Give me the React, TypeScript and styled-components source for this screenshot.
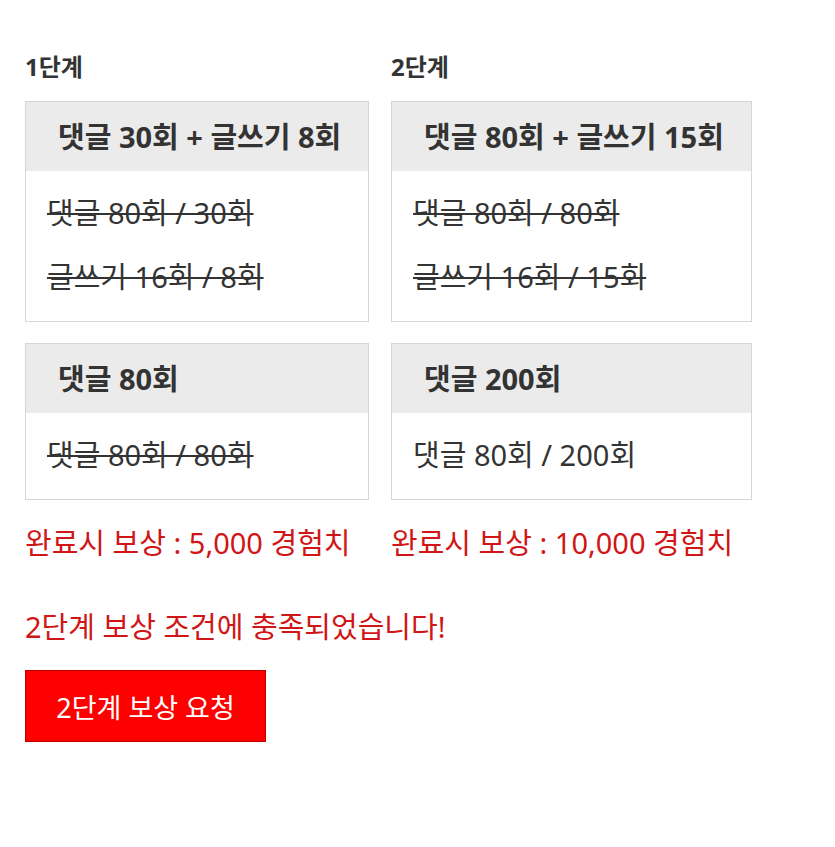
import React from 'react';
import styled, { createGlobalStyle } from 'styled-components';

const GlobalStyle = createGlobalStyle`
  html, body {
    margin: 0;
    padding: 0;
    background: #ffffff;
  }
  body {
    font-family: "Noto Sans", "Noto Sans CJK KR", sans-serif;
    color: #333333;
  }
`;

const Page = styled.div`
  padding: 50px 25px 40px;
`;

const Stages = styled.div`
  display: grid;
  grid-template-columns: 344px 361px;
  column-gap: 22px;
`;

const Stage = styled.div`
  display: flex;
  flex-direction: column;
`;

const StageTitle = styled.h3`
  margin: 1px 0 18px;
  font-size: 24px;
  font-weight: 700;
  line-height: 32px;
  color: #333;
`;

const Mission = styled.div`
  border: 1px solid #d6d6d6;
  background: #fff;
  & + & {
    margin-top: 21px;
  }
`;

const MissionHead = styled.div`
  height: 69px;
  display: flex;
  align-items: center;
  padding: 0 32px 4px;
  box-sizing: border-box;
  background: #ebebeb;
  font-size: 29px;
  font-weight: 700;
  color: #333;
  white-space: nowrap;
`;

const MissionBody = styled.div`
  padding: 10px 21px 12px;
`;

const Progress = styled.div<{ $done?: boolean }>`
  font-size: 29px;
  line-height: 64px;
  color: #333;
  white-space: nowrap;
  text-decoration: ${p => (p.$done ? 'line-through' : 'none')};
  text-decoration-thickness: 2px;
`;

const Reward = styled.div`
  margin-top: 23px;
  font-size: 29px;
  line-height: 40px;
  color: #d01616;
  white-space: nowrap;
`;

const Notice = styled.p`
  margin: 44px 0 0;
  font-size: 29px;
  line-height: 40px;
  color: #d01616;
`;

const RequestButton = styled.button`
  margin-top: 23px;
  width: 241px;
  height: 72px;
  border: 1px solid #b80000;
  background: #ff0000;
  color: #ffffff;
  font-family: inherit;
  font-size: 27px;
  cursor: pointer;
`;

type Line = { text: string; done: boolean };
type MissionData = { title: string; lines: Line[] };

const stages: { name: string; missions: MissionData[]; reward: string }[] = [
  {
    name: '1단계',
    missions: [
      {
        title: '댓글 30회 + 글쓰기 8회',
        lines: [
          { text: '댓글 80회 / 30회', done: true },
          { text: '글쓰기 16회 / 8회', done: true },
        ],
      },
      { title: '댓글 80회', lines: [{ text: '댓글 80회 / 80회', done: true }] },
    ],
    reward: '완료시 보상 : 5,000 경험치',
  },
  {
    name: '2단계',
    missions: [
      {
        title: '댓글 80회 + 글쓰기 15회',
        lines: [
          { text: '댓글 80회 / 80회', done: true },
          { text: '글쓰기 16회 / 15회', done: true },
        ],
      },
      { title: '댓글 200회', lines: [{ text: '댓글 80회 / 200회', done: false }] },
    ],
    reward: '완료시 보상 : 10,000 경험치',
  },
];

export default function App() {
  return (
    <>
      <GlobalStyle />
      <Page>
        <Stages>
          {stages.map(stage => (
            <Stage key={stage.name}>
              <StageTitle>{stage.name}</StageTitle>
              {stage.missions.map(m => (
                <Mission key={m.title}>
                  <MissionHead>{m.title}</MissionHead>
                  <MissionBody>
                    {m.lines.map(l => (
                      <Progress key={l.text} $done={l.done}>
                        {l.text}
                      </Progress>
                    ))}
                  </MissionBody>
                </Mission>
              ))}
              <Reward>{stage.reward}</Reward>
            </Stage>
          ))}
        </Stages>
        <Notice>2단계 보상 조건에 충족되었습니다!</Notice>
        <RequestButton>2단계 보상 요청</RequestButton>
      </Page>
    </>
  );
}
